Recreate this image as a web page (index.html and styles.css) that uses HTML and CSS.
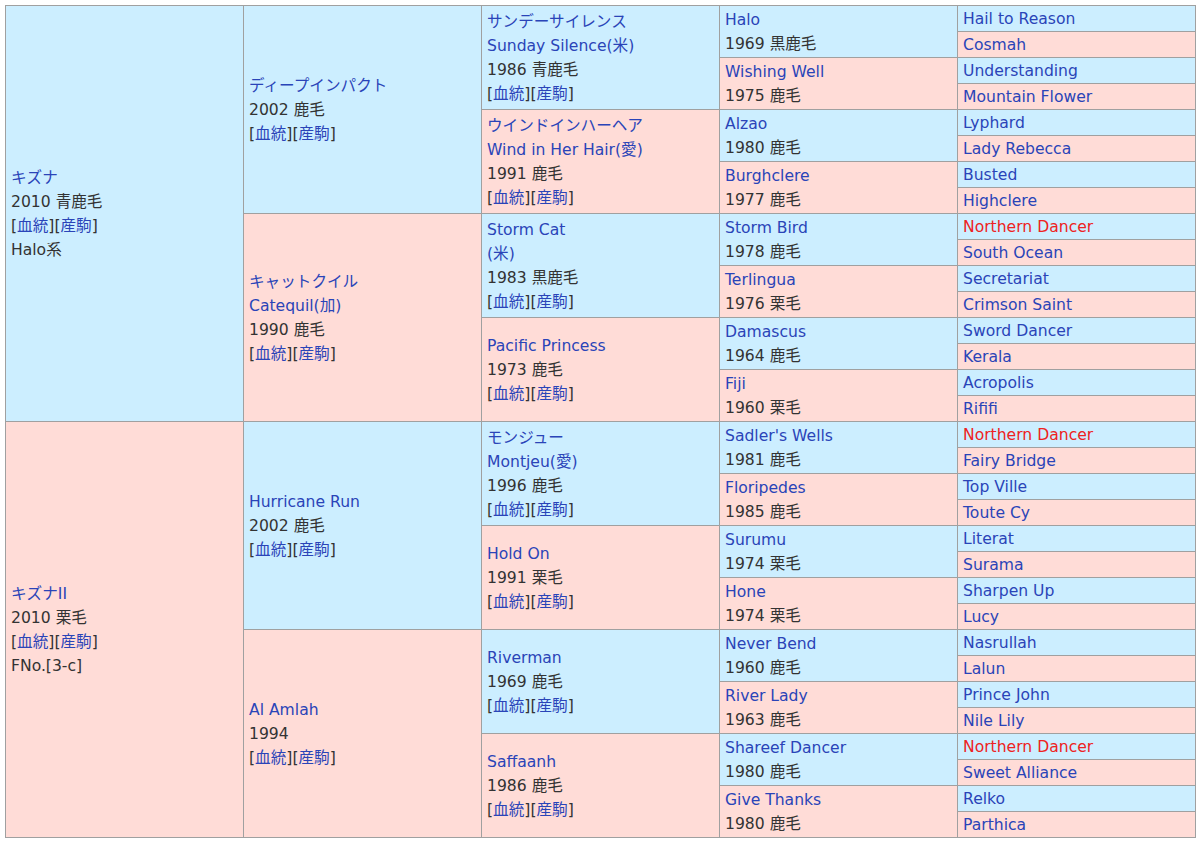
FILE: index.html
```html
<!DOCTYPE html>
<html lang="ja">
<head>
<meta charset="utf-8">
<title>キズナII 血統表</title>
<link rel="stylesheet" href="styles.css">
</head>
<body>
<table class="ped">
<colgroup><col class="c"><col class="c"><col class="c"><col class="c"><col class="c"></colgroup>
<tr>
<td class="m" rowspan="16"><a>キズナ</a><br>2010 青鹿毛<br>[<a>血統</a>][<a>産駒</a>]<br>Halo系</td>
<td class="m" rowspan="8"><a>ディープインパクト</a><br>2002 鹿毛<br>[<a>血統</a>][<a>産駒</a>]</td>
<td class="m" rowspan="4"><a>サンデーサイレンス</a><br><a>Sunday Silence(米)</a><br>1986 青鹿毛<br>[<a>血統</a>][<a>産駒</a>]</td>
<td class="m" rowspan="2"><a>Halo</a><br>1969 黒鹿毛</td>
<td class="m"><a>Hail to Reason</a></td>
</tr>
<tr><td class="f"><a>Cosmah</a></td></tr>
<tr><td class="f" rowspan="2"><a>Wishing Well</a><br>1975 鹿毛</td><td class="m"><a>Understanding</a></td></tr>
<tr><td class="f"><a>Mountain Flower</a></td></tr>
<tr>
<td class="f" rowspan="4"><a>ウインドインハーヘア</a><br><a>Wind in Her Hair(愛)</a><br>1991 鹿毛<br>[<a>血統</a>][<a>産駒</a>]</td>
<td class="m" rowspan="2"><a>Alzao</a><br>1980 鹿毛</td>
<td class="m"><a>Lyphard</a></td>
</tr>
<tr><td class="f"><a>Lady Rebecca</a></td></tr>
<tr><td class="f" rowspan="2"><a>Burghclere</a><br>1977 鹿毛</td><td class="m"><a>Busted</a></td></tr>
<tr><td class="f"><a>Highclere</a></td></tr>
<tr>
<td class="f" rowspan="8"><a>キャットクイル</a><br><a>Catequil(加)</a><br>1990 鹿毛<br>[<a>血統</a>][<a>産駒</a>]</td>
<td class="m" rowspan="4"><a>Storm Cat</a><br><a>(米)</a><br>1983 黒鹿毛<br>[<a>血統</a>][<a>産駒</a>]</td>
<td class="m" rowspan="2"><a>Storm Bird</a><br>1978 鹿毛</td>
<td class="m"><a class="x">Northern Dancer</a></td>
</tr>
<tr><td class="f"><a>South Ocean</a></td></tr>
<tr><td class="f" rowspan="2"><a>Terlingua</a><br>1976 栗毛</td><td class="m"><a>Secretariat</a></td></tr>
<tr><td class="f"><a>Crimson Saint</a></td></tr>
<tr>
<td class="f" rowspan="4"><a>Pacific Princess</a><br>1973 鹿毛<br>[<a>血統</a>][<a>産駒</a>]</td>
<td class="m" rowspan="2"><a>Damascus</a><br>1964 鹿毛</td>
<td class="m"><a>Sword Dancer</a></td>
</tr>
<tr><td class="f"><a>Kerala</a></td></tr>
<tr><td class="f" rowspan="2"><a>Fiji</a><br>1960 栗毛</td><td class="m"><a>Acropolis</a></td></tr>
<tr><td class="f"><a>Rififi</a></td></tr>
<tr>
<td class="f" rowspan="16"><a>キズナII</a><br>2010 栗毛<br>[<a>血統</a>][<a>産駒</a>]<br>FNo.[3-c]</td>
<td class="m" rowspan="8"><a>Hurricane Run</a><br>2002 鹿毛<br>[<a>血統</a>][<a>産駒</a>]</td>
<td class="m" rowspan="4"><a>モンジュー</a><br><a>Montjeu(愛)</a><br>1996 鹿毛<br>[<a>血統</a>][<a>産駒</a>]</td>
<td class="m" rowspan="2"><a>Sadler's Wells</a><br>1981 鹿毛</td>
<td class="m"><a class="x">Northern Dancer</a></td>
</tr>
<tr><td class="f"><a>Fairy Bridge</a></td></tr>
<tr><td class="f" rowspan="2"><a>Floripedes</a><br>1985 鹿毛</td><td class="m"><a>Top Ville</a></td></tr>
<tr><td class="f"><a>Toute Cy</a></td></tr>
<tr>
<td class="f" rowspan="4"><a>Hold On</a><br>1991 栗毛<br>[<a>血統</a>][<a>産駒</a>]</td>
<td class="m" rowspan="2"><a>Surumu</a><br>1974 栗毛</td>
<td class="m"><a>Literat</a></td>
</tr>
<tr><td class="f"><a>Surama</a></td></tr>
<tr><td class="f" rowspan="2"><a>Hone</a><br>1974 栗毛</td><td class="m"><a>Sharpen Up</a></td></tr>
<tr><td class="f"><a>Lucy</a></td></tr>
<tr>
<td class="f" rowspan="8"><a>Al Amlah</a><br>1994<br>[<a>血統</a>][<a>産駒</a>]</td>
<td class="m" rowspan="4"><a>Riverman</a><br>1969 鹿毛<br>[<a>血統</a>][<a>産駒</a>]</td>
<td class="m" rowspan="2"><a>Never Bend</a><br>1960 鹿毛</td>
<td class="m"><a>Nasrullah</a></td>
</tr>
<tr><td class="f"><a>Lalun</a></td></tr>
<tr><td class="f" rowspan="2"><a>River Lady</a><br>1963 鹿毛</td><td class="m"><a>Prince John</a></td></tr>
<tr><td class="f"><a>Nile Lily</a></td></tr>
<tr>
<td class="f" rowspan="4"><a>Saffaanh</a><br>1986 鹿毛<br>[<a>血統</a>][<a>産駒</a>]</td>
<td class="m" rowspan="2"><a>Shareef Dancer</a><br>1980 鹿毛</td>
<td class="m"><a class="x">Northern Dancer</a></td>
</tr>
<tr><td class="f"><a>Sweet Alliance</a></td></tr>
<tr><td class="f" rowspan="2"><a>Give Thanks</a><br>1980 鹿毛</td><td class="m"><a>Relko</a></td></tr>
<tr><td class="f"><a>Parthica</a></td></tr>
</table>
</body>
</html>
```

FILE: styles.css
```css
html, body {
  margin: 0;
  padding: 0;
  background: #ffffff;
}
body {
  padding: 5px;
  font-family: "DejaVu Sans", "Noto Sans CJK JP", sans-serif;
  font-size: 15.6px;
  color: #333333;
}
.ped {
  border-collapse: collapse;
  table-layout: fixed;
  width: 1191px;
}
.ped .c {
  width: 238px;
}
.ped td {
  border: 1px solid #a0a0a0;
  padding: 0 5px;
  line-height: 24px;
  height: 25px;
  vertical-align: middle;
  text-align: left;
  white-space: nowrap;
  overflow: hidden;
}
.ped td.m {
  background: #cceeff;
}
.ped td.f {
  background: #ffdcd7;
}
.ped a {
  color: #2a44b8;
  text-decoration: none;
}
.ped a.x {
  color: #ee2222;
}
```
